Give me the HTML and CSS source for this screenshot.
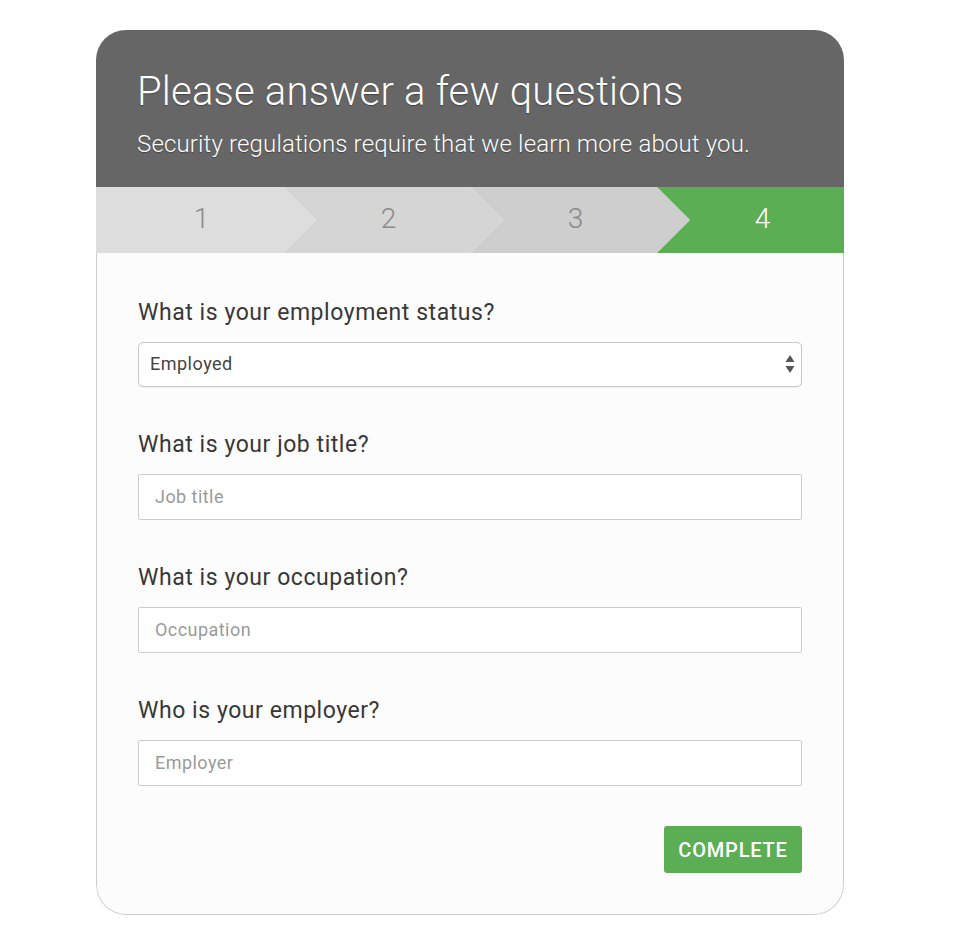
FILE: index.html
```html
<!DOCTYPE html>
<html lang="en">
<head>
  <meta charset="UTF-8" />
  <meta name="viewport" content="width=device-width, initial-scale=1.0"/>
  <title>A few questions</title>
  <link rel="stylesheet" href="styles.css">
</head>
<body>
  <div class="page">
    <div class="card">
      <div class="card-header">
        <h1>Please answer a few questions</h1>
        <p>Security regulations require that we learn more about you.</p>
      </div>

      <!-- Wizard progress -->
      <div class="steps">
        <div class="step step-1">1</div>
        <div class="step step-2">2</div>
        <div class="step step-3">3</div>
        <div class="step step-4 active">4</div>
      </div>

      <form class="card-body">
        <div class="field">
          <label for="status">What is your employment status?</label>
          <div class="select-wrap">
            <select id="status">
              <option>Employed</option>
              <option>Self-employed</option>
              <option>Unemployed</option>
              <option>Retired</option>
            </select>
            <svg class="select-arrows" width="10" height="20" viewBox="0 0 10 20">
              <path d="M5 1 L9.5 8 L0.5 8 Z" fill="#555"/>
              <path d="M0.5 12 L9.5 12 L5 19 Z" fill="#555"/>
            </svg>
          </div>
        </div>

        <div class="field">
          <label for="job">What is your job title?</label>
          <input type="text" id="job" placeholder="Job title">
        </div>

        <div class="field">
          <label for="occupation">What is your occupation?</label>
          <input type="text" id="occupation" placeholder="Occupation">
        </div>

        <div class="field">
          <label for="employer">Who is your employer?</label>
          <input type="text" id="employer" placeholder="Employer">
        </div>

        <div class="actions">
          <button type="button" class="complete-btn">COMPLETE</button>
        </div>
      </form>
    </div>
  </div>
</body>
</html>
```

FILE: styles.css
```css
/* Basic resets & layout */
body {
  margin: 0;
  background: #ffffff;
  font-family: Roboto, 'Liberation Sans', sans-serif;
}

.page {
  padding: 30px 0 30px 96px;
}

.card {
  width: 748px;
  border-radius: 30px;
  overflow: hidden;
}

/* Dark title block */
.card-header {
  background: #666666;
  color: #ffffff;
  padding: 38px 40px 28px 41px;
}

.card-header h1 {
  margin: 0;
  font-size: 40px;
  line-height: 48px;
  font-weight: 300;
  letter-spacing: 0.2px;
  text-shadow: 0 1px 1px rgba(0, 0, 0, 0.35);
}

.card-header p {
  margin: 13px 0 0;
  font-size: 24px;
  line-height: 30px;
  font-weight: 300;
  letter-spacing: 0.15px;
  text-shadow: 0 1px 1px rgba(0, 0, 0, 0.35);
}

/* Chevron steps */
.steps {
  display: flex;
  height: 66px;
}

.step {
  flex: 0 0 220px;
  box-sizing: border-box;
  padding: 0 33px 3px 24px;
  margin-left: -33px;
  display: flex;
  align-items: center;
  justify-content: center;
  font-size: 28px;
  font-weight: 300;
  color: #8a8a8a;
  clip-path: polygon(0 0, calc(100% - 33px) 0, 100% 50%, calc(100% - 33px) 100%, 0 100%, 33px 50%);
}

.step-1 {
  margin-left: 0;
  background: #dddddd;
  clip-path: polygon(0 0, calc(100% - 33px) 0, 100% 50%, calc(100% - 33px) 100%, 0 100%);
}
.step-2 { background: #d5d5d5; }
.step-3 { background: #cecece; }

.step-4 {
  flex: 1;
  padding-right: 0;
  clip-path: polygon(0 0, 100% 0, 100% 100%, 0 100%, 33px 50%);
}

.step.active {
  background: #5cae55;
  color: #ffffff;
}

/* Form */
.card-body {
  margin: 0;
  background: #fcfcfc;
  border: 1px solid #cccccc;
  border-top: none;
  border-radius: 0 0 30px 30px;
  padding: 47px 41px 41px;
}

.field {
  display: flex;
  flex-direction: column;
  margin-bottom: 45px;
}

.field label {
  font-size: 23px;
  line-height: 26px;
  letter-spacing: 0.55px;
  color: #383838;
  margin-bottom: 16px;
}

.select-wrap {
  position: relative;
}

.select-wrap select {
  -webkit-appearance: none;
  appearance: none;
  width: 100%;
  height: 45px;
  box-sizing: border-box;
  border: 1px solid #c8c8c8;
  border-radius: 5px;
  background: #ffffff;
  padding: 0 30px 3px 11px;
  font-family: Roboto, 'Liberation Sans', sans-serif;
  font-size: 18px;
  letter-spacing: 0.5px;
  color: #444444;
  box-shadow: 0 1px 1px rgba(0, 0, 0, 0.05);
}

.select-arrows {
  position: absolute;
  right: 7px;
  top: 12px;
  pointer-events: none;
}

.field input {
  height: 46px;
  box-sizing: border-box;
  border: 1px solid #cccccc;
  border-radius: 2px;
  background: #ffffff;
  padding: 0 16px 2px;
  font-family: Roboto, 'Liberation Sans', sans-serif;
  font-size: 18px;
  letter-spacing: 0.45px;
  color: #444444;
}

.field input::placeholder {
  color: #9a9a9a;
}

.actions {
  display: flex;
  justify-content: flex-end;
  margin-top: -5px;
}

.complete-btn {
  width: 138px;
  height: 47px;
  border: none;
  border-radius: 3px;
  background: #5cae55;
  color: #ffffff;
  font-family: Roboto, 'Liberation Sans', sans-serif;
  font-size: 20px;
  font-weight: 500;
  letter-spacing: 0.8px;
  cursor: pointer;
}
```
